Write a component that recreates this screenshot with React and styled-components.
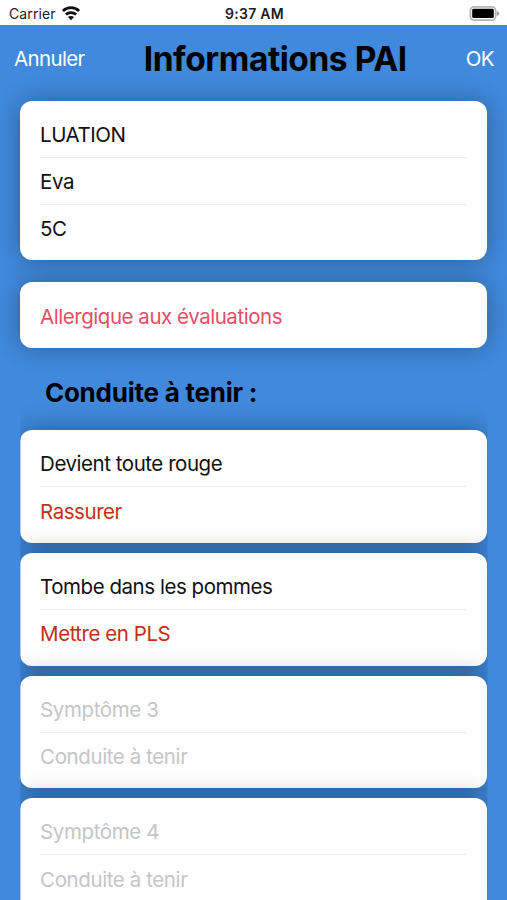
import React, { useState } from "react";
import styled, { createGlobalStyle } from "styled-components";

const GlobalStyle = createGlobalStyle`
    * {
        box-sizing: border-box;
    }
    body {
        margin: 0;
        overflow: hidden;
        background-color: #4089dc;
        font-family: Inter, "Liberation Sans", sans-serif;
    }
`;

const Screen = styled.div`
    height: 100vh;
    overflow: hidden;
    display: flex;
    flex-direction: column;
    background-color: #4089dc;
`;

const StatusBar = styled.div`
    flex: none;
    height: 25px;
    padding: 1px 7px 0 9px;
    display: grid;
    grid-template-columns: 1fr auto 1fr;
    align-items: center;
    background-color: #fff;
    color: #1c1c1c;
    font-size: 14px;
    .carrier {
        display: flex;
        align-items: center;
        gap: 5.5px;
        letter-spacing: 0.1px;
    }
    .time {
        font-weight: 600;
        letter-spacing: 0.3px;
    }
    .battery {
        justify-self: end;
    }
    svg {
        display: block;
    }
`;

const NavBar = styled.header`
    flex: none;
    height: 67px;
    padding: 0 13px 0 14px;
    display: flex;
    justify-content: space-between;
    align-items: center;
    h1 {
        margin: 0;
        font-size: 33.5px;
        font-weight: 700;
        letter-spacing: -0.45px;
        white-space: nowrap;
    }
`;

const NavButton = styled.button`
    padding: 0;
    border: none;
    background: none;
    color: #fff;
    font-family: inherit;
    font-size: 20.5px;
    letter-spacing: -0.65px;
    cursor: pointer;
`;

const Content = styled.main`
    flex: 1;
    padding: 8.7px 19.6px 0 20.4px;
`;

const Stack = styled.div`
    display: flex;
    flex-direction: column;
    gap: ${({ $gap }) => $gap}px;
`;

const Card = styled.div`
    padding: 10.4px 20px 9px 19.7px;
    border-radius: 12px;
    background-color: #fff;
    box-shadow: 0 0 25px rgba(0, 0, 0, ${({ $shade }) => $shade || 0.3});
`;

const Field = styled.input`
    display: block;
    width: 100%;
    height: 46.8px;
    padding: 1px 0 0;
    border: none;
    border-radius: 0;
    outline: none;
    background: transparent;
    color: ${({ $color }) => $color || "#111"};
    font-family: inherit;
    font-size: 20.5px;
    letter-spacing: -0.46px;
    &::placeholder {
        color: #c5c5c7;
        letter-spacing: -0.4px;
    }
    &:not(:last-child) {
        border-bottom: 1px solid #ececed;
    }
`;

const SectionTitle = styled.h2`
    margin: 0;
    height: 82px;
    padding: 7px 0 0 24.5px;
    display: flex;
    align-items: center;
    font-size: 26px;
    font-weight: 700;
    letter-spacing: -0.24px;
`;

// the side shadows are cut off at the edge of the list
const SymptomList = styled(Stack)`
    clip-path: inset(-30px 0 0 0);
`;

const WifiIcon = () => (
    <svg width="20" height="15" viewBox="0 0 20 15" fill="none" stroke="#111" strokeWidth="2.8">
        <path d="M1.9 5C6.4 0.6 13.6 0.6 18.1 5" />
        <path d="M4.9 8.5C7.7 5.9 12.3 5.9 15.1 8.5" />
        <path d="M10 14.2L6.9 11.1C8.5 9.5 11.5 9.5 13.1 11.1Z" fill="#111" stroke="none" />
    </svg>
);

const BatteryIcon = () => (
    <svg className="battery" width="31" height="15" viewBox="0 0 31 15">
        <rect x="1.4" y="0.9" width="25.2" height="13.2" rx="3.5" fill="#fff" stroke="#b5b5b5" strokeWidth="1.8" />
        <rect x="3.2" y="2.7" width="21.6" height="9.4" rx="1.4" fill="#000" />
        <path d="M27.8 5.2C31 5.8 31 9.2 27.8 9.8Z" fill="#999" />
    </svg>
);

const initialSymptoms = [
    { symptom: "Devient toute rouge", action: "Rassurer" },
    { symptom: "Tombe dans les pommes", action: "Mettre en PLS" },
    { symptom: "", action: "" },
    { symptom: "", action: "" },
];

export const App = () => {

    const [symptoms, setSymptoms] = useState(initialSymptoms);

    const updateSymptom = (index, key, value) => {
        setSymptoms(symptoms.map((s, i) => (i === index ? { ...s, [key]: value } : s)));
    };

    return (
        <Screen>
            <GlobalStyle />
            <StatusBar>
                <div className="carrier">
                    <span>Carrier</span>
                    <WifiIcon />
                </div>
                <span className="time">9:37 AM</span>
                <BatteryIcon />
            </StatusBar>
            <NavBar>
                <NavButton>Annuler</NavButton>
                <h1>Informations PAI</h1>
                <NavButton>OK</NavButton>
            </NavBar>
            <Content>
                <Stack $gap={21.5}>
                    <Card>
                        <Field defaultValue="LUATION" />
                        <Field defaultValue="Eva" />
                        <Field defaultValue="5C" />
                    </Card>
                    <Card>
                        <Field defaultValue="Allergique aux évaluations" $color="#e64c66" />
                    </Card>
                </Stack>
                <SectionTitle>Conduite à tenir :</SectionTitle>
                <SymptomList $gap={9.7}>
                    {symptoms.map((s, index) => (
                        <Card key={index} $shade={0.35}>
                            <Field
                                value={s.symptom}
                                placeholder={`Symptôme ${index + 1}`}
                                onChange={(e) => updateSymptom(index, "symptom", e.target.value)}
                            />
                            <Field
                                value={s.action}
                                placeholder="Conduite à tenir"
                                $color="#c23018"
                                onChange={(e) => updateSymptom(index, "action", e.target.value)}
                            />
                        </Card>
                    ))}
                </SymptomList>
            </Content>
        </Screen>
    );
};

export default App;
